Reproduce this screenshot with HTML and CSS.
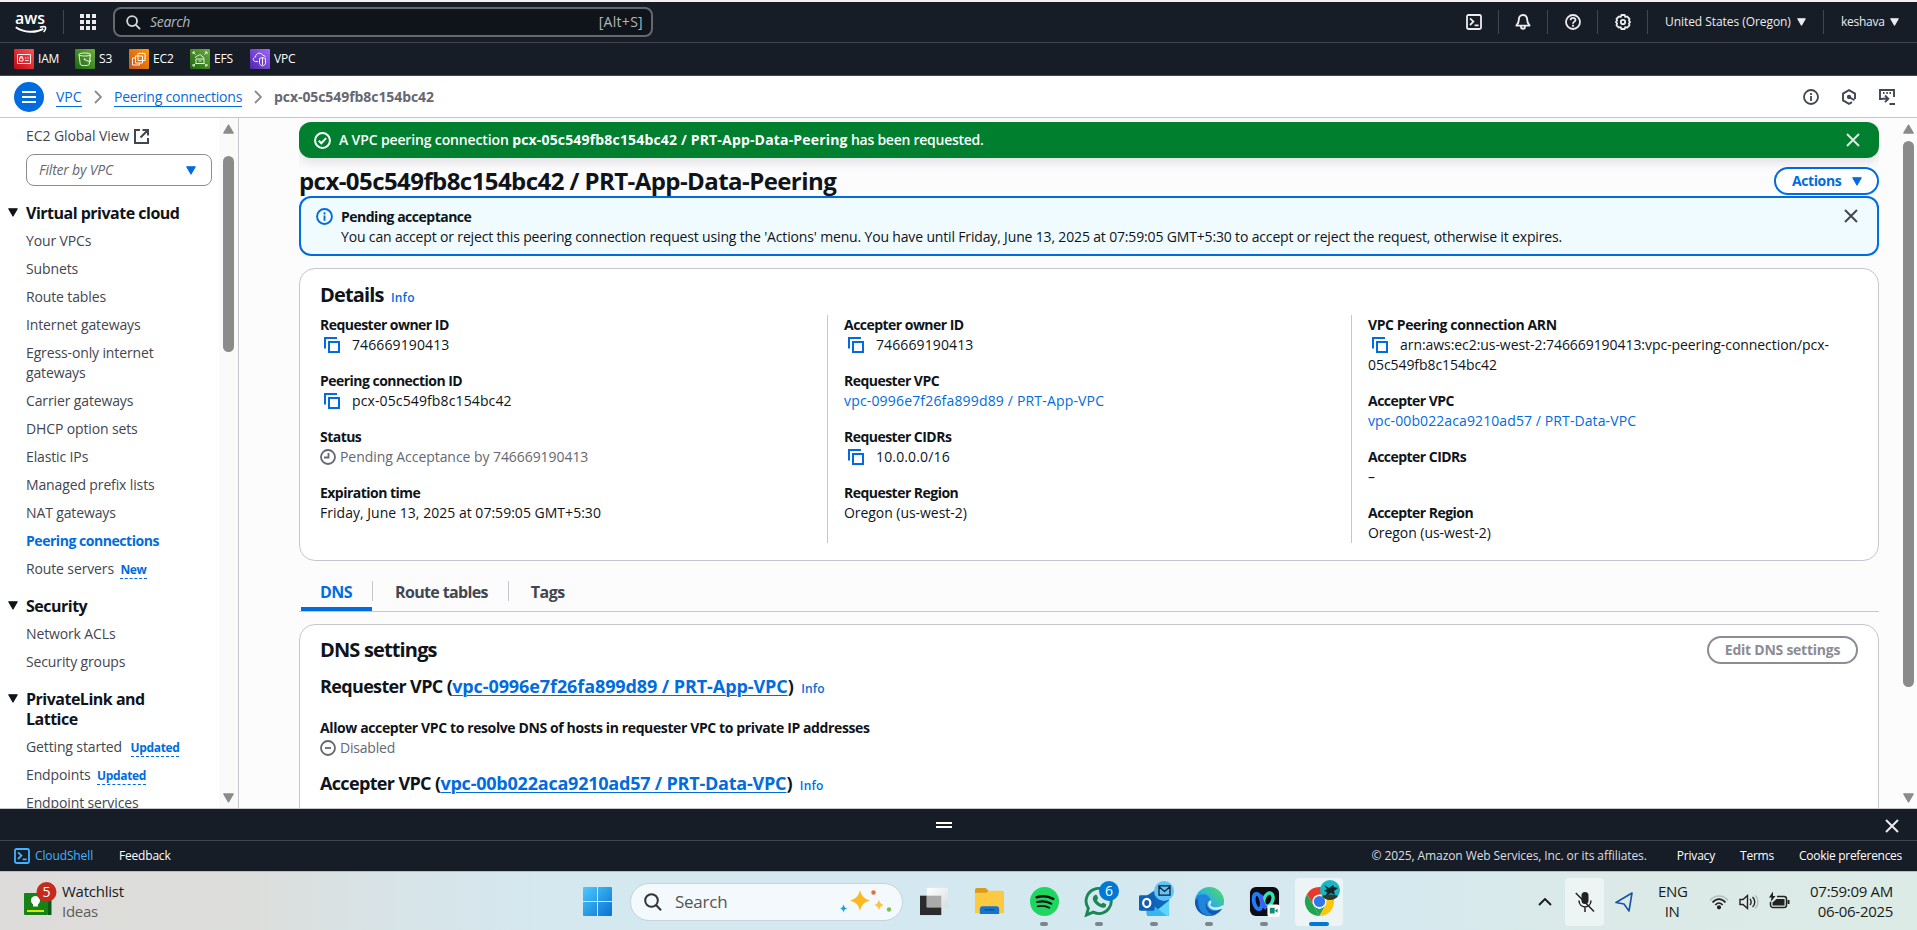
FILE: index.html
```html
<!DOCTYPE html>
<html lang="en">
<head>
<meta charset="utf-8">
<title>Peering connections | VPC Console</title>
<link rel="stylesheet" href="styles.css">
</head>
<body>
<svg class="defs" aria-hidden="true">
  <symbol id="i-copy" viewBox="0 0 16 16"><path d="M1 11.5V1h12M5 5h10v10H5z" fill="none" stroke="currentColor" stroke-width="2"/></symbol>
  <symbol id="i-close" viewBox="0 0 16 16"><path d="M2 2l12 12M14 2L2 14" fill="none" stroke="currentColor" stroke-width="2"/></symbol>
  <symbol id="i-tri" viewBox="0 0 10 9"><path d="M.8.8h8.4L5 8z" fill="currentColor" stroke="currentColor" stroke-width="1.2" stroke-linejoin="round"/></symbol>
  <symbol id="i-chev" viewBox="0 0 8 14"><path d="M1 1l6 6-6 6" fill="none" stroke="currentColor" stroke-width="1.9"/></symbol>
  <symbol id="i-info" viewBox="0 0 16 16"><g fill="none" stroke="currentColor" stroke-width="1.8"><circle cx="8" cy="8" r="7"/><path d="M8 7v5M8 4v2"/></g></symbol>
  <symbol id="i-shell" viewBox="0 0 16 16"><g fill="none" stroke="currentColor" stroke-width="1.8"><rect x="1" y="1" width="14" height="14" rx="1.5"/><path d="M4 4.4l3.4 3.2L4 11M8.6 11.4h4"/></g></symbol>
  <symbol id="i-search" viewBox="0 0 16 16"><g fill="none" stroke="currentColor" stroke-width="2"><circle cx="6.5" cy="6.5" r="5.3"/><path d="M10.3 10.3L15 15"/></g></symbol>
</svg>

<div class="strip"></div>
<header class="topbar">
  <svg class="aws" viewBox="0 0 32 24"><text x="0" y="14" font-size="17" textLength="30" lengthAdjust="spacingAndGlyphs" fill="#fff" class="awstext">aws</text><path d="M.8 17.200c8 5.700 20 5.900 27.500 1.600" fill="none" stroke="#fff" stroke-width="2"/><path d="M24.800 17.300c2.600-.8 5.400-.6 5.700-.1.300.7-.3 3-1.900 4.800" fill="none" stroke="#fff" stroke-width="1.500"/></svg>
  <i class="vbar v1"></i>
  <svg class="apps" viewBox="0 0 16 16" fill="#ebebf0"><path d="M0 0h4v4H0zM6 0h4v4H6zM12 0h4v4h-4zM0 6h4v4H0zM6 6h4v4H6zM12 6h4v4h-4zM0 12h4v4H0zM6 12h4v4H6zM12 12h4v4h-4z"/></svg>
  <div class="search"><svg width="15" height="15"><use href="#i-search"/></svg><em>Search</em><span>[Alt+S]</span></div>
  <div class="tools">
    <svg class="t16"><use href="#i-shell"/></svg><i class="vbar t1"></i>
    <svg class="t16" viewBox="0 0 16 16" fill="none" stroke="currentColor" stroke-width="1.900" stroke-linejoin="round"><path d="M8 1C5.200 1 3.900 3 3.900 5.200 3.900 8.300 3.200 9.600 1.400 11.600h13.200c-1.800-2-2.500-3.300-2.500-6.400C12.100 3 10.800 1 8 1zM6 12.500c0 3 4 3 4 0"/></svg><i class="vbar"></i>
    <svg class="t16" viewBox="0 0 16 16" fill="none" stroke="currentColor" stroke-width="1.800"><circle cx="8" cy="8" r="7"/><path d="M5.600 6.300c0-3.200 4.900-3 4.900-.3C10.500 7.700 8 7.600 8 9.800M8 10.800v1.900"/></svg><i class="vbar"></i>
    <svg class="t16" viewBox="0 0 16 16" fill="none" stroke="currentColor" stroke-width="1.800" stroke-linejoin="round"><path d="M6.300 1h3.400l.5 2 1.900-.5 2.400 2.400-.6 1.600 1.200 1.500-1.200 1.500.6 1.800-2.300 2.300-2-.5-.5 1.900H6.300l-.5-1.900-2 .5-2.300-2.300.6-1.800L.9 8l1.200-1.500-.6-1.600 2.400-2.400 1.900.5z"/><circle cx="8" cy="8" r="2.200"/></svg><i class="vbar"></i>
    <b class="region">United States (Oregon)</b><svg class="tri w"><use href="#i-tri"/></svg><i class="vbar t5"></i>
    <b class="user">keshava</b><svg class="tri w"><use href="#i-tri"/></svg>
  </div>
</header>

<nav class="favs">
  <a class="f1"><svg class="red" viewBox="0 0 20 20"><path d="M3.500 5.500h13v9h-13zM5.500 9h3.500v3h-3.500zM6.300 9V7.600h2V9M11 9h1.300M13.500 9h1.200M11 11.500h3.500"/></svg>IAM</a>
  <a class="f2"><svg class="green" viewBox="0 0 20 20"><path d="M4 5.500c0-2 11.500-2 11.500 0S4 7.500 4 5.500l1.300 10c.8 1.400 8 1.400 8.900 0l1.200-10M9.500 10.500l4 1.800c2 .8 3.200-.4 1.400-1.600"/><circle cx="9.500" cy="10.200" r=".5"/></svg>S3</a>
  <a class="f3"><svg class="orange" viewBox="0 0 20 20"><path d="M9 4.500h7v7h-7zM6.500 7h7v7h-7zM6 9H3.500v7h7v-2M11 3.500v1M13.500 3.500v1M16 7h1M16 9.500h1"/></svg>EC2</a>
  <a class="f4"><svg class="green" viewBox="0 0 20 20"><path d="M5.500 9c0-1.500 1.500-2.500 2.500-2 1-2 4-1.500 4 .8 1.500 0 2 .8 2 1.700M6 10h8M6 10v4.500h8V10M8.500 12h3M3 5V3h2M3 3l2.500 2.500M15 3h2v2M17 3l-2.500 2.500M3 15v2h2M3 17l2.500-2.500M15 17h2v-2M17 17l-2.500-2.500"/></svg>EFS</a>
  <a class="f5"><svg class="purple" viewBox="0 0 20 20"><path d="M8 12.500H5.500c-3-.3-3-4 0-4.500 0-4 6-5.500 7.500-1.500 1.500-.3 2 .5 2.300 1.500M9.500 9.500l3-1 3 1v5c-.5 1.500-2 2-3 2.500-1-.5-2.500-1-3-2.500zM12.500 9v7"/></svg>VPC</a>
</nav>

<div class="crumbs">
  <span class="burger"><svg viewBox="0 0 14 12"><path d="M0 1h14M0 6h14M0 11h14" stroke="#fff" stroke-width="2"/></svg></span>
  <a class="c1">VPC</a><svg class="chev"><use href="#i-chev"/></svg><a class="c2">Peering connections</a><svg class="chev ch2"><use href="#i-chev"/></svg><b>pcx-05c549fb8c154bc42</b>
  <div class="panelicons">
    <svg><use href="#i-info"/></svg>
    <svg viewBox="0 0 16 16" fill="none" stroke="currentColor" stroke-width="1.900"><path d="M14 10V4.600L8 1.200 2 4.600v6.800l6 3.400 3-1.700"/><circle cx="8" cy="8" r="1.200" fill="currentColor"/><path d="M8.500 8.300l5 2.900"/></svg>
    <svg viewBox="0 0 16 16" fill="none" stroke="currentColor" stroke-width="1.900"><path d="M3 10H1V1h14v7M4 4h1.500M7.300 4h1.500M10.500 4H12M3 9.800h5.500M6 6.500l3.300 3.300L6 13.200M10.500 15H16"/></svg>
  </div>
</div>

<div class="body">
  <aside class="side">
    <nav class="menu">
      <a class="ext">EC2 Global View<svg viewBox="0 0 15 15" fill="none" stroke="currentColor" stroke-width="2"><path d="M6 1H1v13h13V9M8.500 1H14v5.500M14 1L6.500 8.500"/></svg></a>
      <div class="filter"><em>Filter by VPC</em><svg class="tri"><use href="#i-tri"/></svg></div>
      <h3><svg class="tri"><use href="#i-tri"/></svg>Virtual private cloud</h3>
      <a>Your VPCs</a><a>Subnets</a><a>Route tables</a><a>Internet gateways</a><a>Egress-only internet<br>gateways</a><a>Carrier gateways</a><a>DHCP option sets</a><a>Elastic IPs</a><a>Managed prefix lists</a><a>NAT gateways</a><a class="on">Peering connections</a><a>Route servers <b>New</b></a>
      <h3><svg class="tri"><use href="#i-tri"/></svg>Security</h3>
      <a>Network ACLs</a><a>Security groups</a>
      <h3><svg class="tri"><use href="#i-tri"/></svg>PrivateLink and<br>Lattice</h3>
      <a class="gs">Getting started <b>Updated</b></a><a>Endpoints <b>Updated</b></a><a>Endpoint services</a>
    </nav>
    <div class="sbar"><svg class="up"><use href="#i-tri"/></svg><i></i><svg class="down"><use href="#i-tri"/></svg></div>
  </aside>

  <main>
    <div class="flash"><svg class="ic" viewBox="0 0 16 16" fill="none" stroke="currentColor" stroke-width="1.900"><circle cx="8" cy="8" r="7"/><path d="M4.500 8.200l2.400 2.400 4.500-4.800"/></svg><b>A VPC peering connection <strong>pcx-05c549fb8c154bc42 / PRT-App-Data-Peering</strong><span> has been requested.</span></b><svg class="x"><use href="#i-close"/></svg></div>
    <div class="titlebar"><h1>pcx-05c549fb8c154bc42 / PRT-App-Data-Peering</h1><button class="btn act">Actions<svg class="tri"><use href="#i-tri"/></svg></button></div>
    <div class="alert"><svg class="ic"><use href="#i-info"/></svg><div><b>Pending acceptance</b><p>You can accept or reject this peering connection request using the 'Actions' menu. You have until Friday, June 13, 2025 at 07:59:05 GMT+5:30 to accept or reject the request, otherwise it expires.</p></div><svg class="x"><use href="#i-close"/></svg></div>

    <section class="card details">
      <h2>Details <small>Info</small></h2>
      <div class="cols">
        <dl>
          <dt>Requester owner ID</dt><dd class="n"><svg><use href="#i-copy"/></svg>746669190413</dd>
          <dt>Peering connection ID</dt><dd class="n"><svg><use href="#i-copy"/></svg>pcx-05c549fb8c154bc42</dd>
          <dt>Status</dt><dd class="gray"><svg viewBox="0 0 16 16" fill="none" stroke="currentColor" stroke-width="1.800"><circle cx="8" cy="8" r="7"/><path d="M8.500 4v4.500H4"/></svg>Pending Acceptance by 746669190413</dd>
          <dt>Expiration time</dt><dd>Friday, June 13, 2025 at 07:59:05 GMT+5:30</dd>
        </dl>
        <dl>
          <dt>Accepter owner ID</dt><dd class="n"><svg><use href="#i-copy"/></svg>746669190413</dd>
          <dt>Requester VPC</dt><dd class="link">vpc-0996e7f26fa899d89 / PRT-App-VPC</dd>
          <dt>Requester CIDRs</dt><dd class="ip"><svg><use href="#i-copy"/></svg>10.0.0.0/16</dd>
          <dt>Requester Region</dt><dd class="w">Oregon (us-west-2)</dd>
        </dl>
        <dl>
          <dt class="long">VPC Peering connection ARN</dt><dd class="arn"><svg><use href="#i-copy"/></svg>arn:aws:ec2:us-west-2:746669190413:vpc-peering-connection/pcx-<br>05c549fb8c154bc42</dd>
          <dt>Accepter VPC</dt><dd class="link l2">vpc-00b022aca9210ad57 / PRT-Data-VPC</dd>
          <dt>Accepter CIDRs</dt><dd>–</dd>
          <dt>Accepter Region</dt><dd class="w">Oregon (us-west-2)</dd>
        </dl>
      </div>
    </section>

    <div class="tabs"><span class="tab sel">DNS</span><i></i><span class="tab">Route tables</span><i></i><span class="tab">Tags</span></div>

    <section class="card dns">
      <div class="dnshead"><h2>DNS settings</h2><button class="btn off">Edit DNS settings</button></div>
      <h4>Requester VPC (<a>vpc-0996e7f26fa899d89 / PRT-App-VPC</a>) <small>Info</small></h4>
      <p class="lab">Allow accepter VPC to resolve DNS of hosts in requester VPC to private IP addresses</p>
      <p class="dis"><svg viewBox="0 0 16 16" fill="none" stroke="currentColor" stroke-width="1.800"><circle cx="8" cy="8" r="7"/><path d="M5 8h6"/></svg>Disabled</p>
      <h4 class="h42">Accepter VPC (<a>vpc-00b022aca9210ad57 / PRT-Data-VPC</a>) <small>Info</small></h4>
    </section>
  </main>
  <div class="sbar mainbar"><svg class="up"><use href="#i-tri"/></svg><i></i><svg class="down"><use href="#i-tri"/></svg></div>
</div>

<div class="drawer"><svg class="grip" viewBox="0 0 16 6"><path d="M0 1h16M0 5h16" stroke="#fff" stroke-width="1.800"/></svg><svg class="x"><use href="#i-close"/></svg></div>
<footer class="foot"><svg class="t16"><use href="#i-shell"/></svg><span class="cs">CloudShell</span><b class="fb">Feedback</b><span class="copy">© 2025, Amazon Web Services, Inc. or its affiliates.</span><b class="p1">Privacy</b><b class="p2">Terms</b><b class="p3">Cookie preferences</b></footer>

<div class="taskbar">
  <div class="watch">
    <svg viewBox="0 0 34 38"><rect x="0" y="13" width="24" height="22" rx="1" fill="#178217"/><path d="M24 14h3.500v21H24z" fill="#0c5c14"/><circle cx="11.500" cy="20.500" r="4.500" fill="#fff"/><path d="M9 23h5v3.500H9z" fill="#fff"/><path d="M3 30h17v2H3z" fill="#d6ea00"/><circle cx="22.500" cy="12" r="10" fill="#c42b1c"/><text x="22.500" y="17" font-size="14" text-anchor="middle" fill="#fff">5</text></svg>
    <div class="wtext"><span>Watchlist</span><span class="sub">Ideas</span></div>
  </div>
  <svg class="win" viewBox="0 0 29 29"><defs><linearGradient id="gw" x1="0" y1="0" x2="1" y2="1"><stop offset="0" stop-color="#4ccbff"/><stop offset="1" stop-color="#0a6fd0"/></linearGradient></defs><path d="M1 0h13v14H0V1a1 1 0 011-1zM15 0h13a1 1 0 011 1v13H15zM0 15h14v14H1a1 1 0 01-1-1zM15 15h14v13a1 1 0 01-1 1H15z" fill="url(#gw)"/></svg>
  <div class="tsearch"><svg class="mag" viewBox="0 0 18 18" fill="none" stroke="#333" stroke-width="2"><circle cx="7.500" cy="7.500" r="6.300"/><path d="M12 12l5 5.200"/></svg><span>Search</span><svg class="spark" viewBox="0 0 52 24"><path d="M20 0c1.600 6.300 4 8.800 10 10.500-6 1.800-8.400 4-10 10.500-1.600-6.500-4-8.700-10-10.500C16 8.800 18.400 6.300 20 0z" fill="#f9b91f"/><path d="M39 9.500c.9 3.500 2 4.700 5 5.500-3 .9-4.100 2-5 5.500-.9-3.500-2-4.600-5-5.500 3-.8 4.100-2 5-5.500z" fill="#fcc53c"/><path d="M3.500 14.500c.7 2.600 1.500 3.300 3.800 4-2.300.6-3.100 1.400-3.800 4-.7-2.600-1.500-3.400-3.500-4 2-.7 2.800-1.400 3.500-4z" fill="#1ba1e6"/><circle cx="33.500" cy="2.500" r="2.200" fill="#ec6b38"/><circle cx="49" cy="19.500" r="2.200" fill="#7cc142"/></svg></div>
  <div class="apps2">
    <div><svg viewBox="0 0 32 32"><defs><linearGradient id="gt" x1="0" y1="0" x2="1" y2="1"><stop offset="0" stop-color="#fff"/><stop offset="1" stop-color="#d9dde0"/></linearGradient></defs><path d="M1 10h22v20H1z" fill="#2b2b2b"/><path d="M8 2h22v20H8z" fill="url(#gt)"/><path d="M8 10h15v12H8z" fill="#aaa"/></svg></div>
    <div><svg viewBox="0 0 32 32"><path d="M1 4a2 2 0 012-2h9l3 3v6H1z" fill="#d99a1e"/><path d="M1 7h12l2-2h14a2 2 0 012 2v21H1z" fill="#fcc941"/><path d="M6 29v-5a3 3 0 013-3h14a3 3 0 013 3v5z" fill="#1574cf"/><path d="M11 24.500h10" stroke="#0b4f9c" stroke-width="1.500"/></svg></div>
    <div class="run"><svg viewBox="0 0 32 32"><circle cx="16" cy="16" r="15" fill="#1ed760"/><g fill="none" stroke="#121212" stroke-linecap="round"><path d="M8 11.500c6-1.700 12-1 17 1.700" stroke-width="2.700"/><path d="M8.500 16.500c5-1.400 10-.7 14.500 1.700" stroke-width="2.300"/><path d="M9 21c4.500-1.100 8.500-.5 12 1.500" stroke-width="1.900"/></g></svg></div>
    <div class="run"><svg viewBox="0 0 32 32"><path d="M2.500 30l2-7A13 13 0 1116 28.500c-2.500 0-4.500-.6-6.500-1.500z" fill="none" stroke="#1b8755" stroke-width="3"/><path d="M11 9.500c1-.8 2-.6 2.500.4l1 2.400c.3.700-1 1.800-1.200 2.200.8 1.800 2.400 3.300 4.500 4.200.6-.4 1.400-1.700 2-1.500l2.800 1.400c.8.500.2 2.800-1 3.600-4 2-13-4.500-12.500-9.700.1-1 .9-2.300 1.900-3z" fill="#1b8755"/></svg><em>6</em></div>
    <div class="run"><svg viewBox="0 0 32 32"><path d="M8 10l10-7 13 9v17a2 2 0 01-2 2H10a2 2 0 01-2-2z" fill="#1266ba"/><path d="M8 16l12 8 11-9v14a2 2 0 01-2 2H10a2 2 0 01-2-2z" fill="#36b5f1"/><path d="M20 24l11-9v14a2 2 0 01-2 2z" fill="#5fd6ff"/><rect x="0" y="9.500" width="16" height="16" rx="1.500" fill="#0f5fb5"/><ellipse cx="8" cy="17.500" rx="3.700" ry="4.200" fill="none" stroke="#fff" stroke-width="2.300"/></svg><em class="mail"><svg viewBox="0 0 14 12" fill="none" stroke="#14202c" stroke-width="1.400"><path d="M1 1h12v10H1zM1 2l6 5 6-5"/></svg></em></div>
    <div class="run"><svg viewBox="0 0 32 32"><defs><linearGradient id="ge" x1="0" y1="1" x2="1" y2="0"><stop offset="0" stop-color="#1b6fd0"/><stop offset=".5" stop-color="#2bb3e0"/><stop offset="1" stop-color="#56e04a"/></linearGradient></defs><circle cx="16" cy="16" r="15" fill="url(#ge)"/><path d="M1 16c2-7 13-8 16-2-4 1-5 6-2 9 4 4 10 3 14 0-4 7-13 9.500-20 6.500C4 27 1 22 1 16z" fill="#1558b3"/><path d="M3 11c5-4 12-3 14 3-5 1-7 8-2 13 2 2 5 3.500 8 2.500C13 33 5 27 4.500 19 4.200 16 4 14 3 11z" fill="#1f84dc"/><path d="M17 15c2 1.500.2 3.300-.3 4.600 2 3.400 9 3 13.300-.1l1 2.500c-1 1-1.700 1.800-2.200 1.600-4.800 2-11 1.500-13.500-2.500-1.300-2.400-.6-5 1.700-6.100z" fill="#d7eaf0"/></svg></div>
    <div class="run"><svg viewBox="0 0 32 32"><rect x="1" y="1" width="30" height="30" rx="6" fill="#0c0c12"/><ellipse cx="9" cy="16" rx="4" ry="8" transform="rotate(-12 9 16)" fill="none" stroke="#1f7bff" stroke-width="4"/><ellipse cx="20" cy="14" rx="4.500" ry="7" transform="rotate(20 20 14)" fill="none" stroke="#2ee6b0" stroke-width="3.500"/><path d="M12 9c1 7 3 12 6 14" fill="none" stroke="#3f5ff5" stroke-width="4"/><rect x="19" y="19" width="13" height="13" rx="3" fill="#fff"/><path d="M21.500 22.500h5v6h-5zM26.500 25.500l3-2v4z" fill="#0d8f6f"/></svg></div>
    <div class="run cur"><svg viewBox="0 0 32 32"><path d="M3 8.500A15 15 0 0129 8.500L16 16z" fill="#e33b2e"/><path d="M3 8.500L10 20l6-4V8.500z" fill="#e33b2e"/><path d="M3 8.500l7 11.500 6 11A15 15 0 013 8.500z" fill="#22a352"/><path d="M10 20l6 4 6-4-6 11z" fill="#22a352"/><path d="M16 31A15 15 0 0029 8.500H16L22 20z" fill="#fdc60b"/><circle cx="16" cy="16" r="7.300" fill="#fff"/><circle cx="16" cy="16" r="5.800" fill="#2f77ee"/></svg><em class="pic"><svg viewBox="0 0 20 20"><circle cx="10" cy="10" r="10" fill="#19b6c4"/><path d="M2 16a10 10 0 0016 0c-4-2-12-2-16 0z" fill="#2b3a33"/><path d="M4 5l5 3 4-3 1 2 4 1-4 3 1 4-4-2-5 3 1-4-3-1 3-2z" fill="#10262c"/></svg></em></div>
  </div>
  <div class="tray">
    <svg class="up2" viewBox="0 0 14 8"><path d="M1 7l6-6 6 6" fill="none" stroke="#1b1b1b" stroke-width="1.900"/></svg>
    <div class="mic"><svg viewBox="0 0 20 22"><rect x="6.500" y="1" width="7" height="12" rx="3.500" fill="#222"/><path d="M4 9.500c0 8.500 12 8.500 12 0M10 16v5M.8 2L19 20.500" fill="none" stroke="#222" stroke-width="1.500"/></svg></div>
    <svg class="loc" viewBox="0 0 18 20" fill="none" stroke="#1352a8" stroke-width="1.600" stroke-linejoin="round"><path d="M17 1L1 10.500l8 1.500 5 7z"/></svg>
    <div class="lang"><span>ENG</span><span>IN</span></div>
    <svg class="wifi" viewBox="0 0 20 17" fill="none" stroke="#222" stroke-width="1.600"><path d="M1 7.500c5-6 13-6 18 0" stroke="#b3bfbf"/><path d="M3.500 9.500c4-4.500 9-4.500 13 0M6.300 12c2.300-2.600 5-2.600 7.400 0"/><circle cx="10" cy="14.300" r="1.300" fill="#222"/></svg>
    <svg class="vol" viewBox="0 0 20 16" fill="none" stroke="#222" stroke-width="1.400"><path d="M1 5.500h3L8.500 1.500v13L4 10.500H1z"/><path d="M11 5c1.500 1.500 1.500 4.500 0 6M13.500 3c3 2.500 3 7.500 0 10"/><path d="M16 1.500c3.800 3 3.800 10 0 13" stroke="#b3bfbf"/></svg>
    <svg class="bat" viewBox="0 0 21 17"><path d="M8 4.500h7a2.500 2.500 0 012.500 2.500v6a2.500 2.500 0 01-2.500 2.500H4A2.500 2.500 0 011.500 13v-3" fill="none" stroke="#222" stroke-width="1.500"/><path d="M7.500 7h8v6.500h-12V10.500zM18.500 8h2v4h-2zM4-.5L0 5.500h2.500L1.700 10 6.500 4H4z" fill="#222"/></svg>
    <div class="clock"><span>07:59:09 AM</span><span>06-06-2025</span></div>
  </div>
</div>
</body>
</html>
```

FILE: styles.css
```css
*{box-sizing:border-box}
html,body{margin:0;padding:0}
body{width:1917px;height:930px;overflow:hidden;display:flex;flex-direction:column;font:14px/20px "Open Sans","Noto Sans",sans-serif;color:#0f141a;letter-spacing:-.16px;background:#fff}
.defs{position:absolute;width:0;height:0}
svg{display:block;flex:none}
h1,h2,h3,h4,p,dl,dt,dd{margin:0;font-weight:700}
p,dd{font-weight:400}
i{display:block;flex:none}
.tri{width:10px;height:9px}
.t16{width:16px;height:16px}
.x{width:16px;height:16px}

.strip{height:2px;background:#f6eef0}
.topbar{height:41px;background:#161d26;border-bottom:1px solid #424650;display:flex;align-items:center;color:#ebebf0;padding-left:15px;flex:none}
.aws{width:32px;height:24px;overflow:visible}
.awstext{font-family:"Open Sans",sans-serif;font-weight:600;letter-spacing:0}
.vbar{width:1px;height:24px;background:#424650}
.v1{margin:0 16px}
.apps{width:16px;height:16px}
.search{margin-left:17px;width:540px;height:30px;border:2px solid #656871;border-radius:8px;background:#0f141a;display:flex;align-items:center;padding:0 8px 0 11px;color:#d5d5da}
.search em{margin-left:9px;color:#b4b4bb;letter-spacing:-.3px}
.search span{margin-left:auto;color:#b4b4bb;letter-spacing:.3px}
.tools{margin-left:auto;display:flex;align-items:center;padding-right:18px;font-size:12px;letter-spacing:-.06px}
.tools .vbar{margin:0 17px 0 16px}
.tools .t1{margin-right:16px}
.tools .t5{margin-left:17px}
.tools b,.foot b{font-weight:500}
.tools .region{width:126px;white-space:nowrap}
.tools .user{width:43px;letter-spacing:-.25px}
.tools .w{margin-left:6px;width:9px;height:8px}

.favs{height:33px;background:#161d26;border-bottom:1px solid #424650;display:flex;align-items:center;color:#fff;font-size:12px;font-weight:500;flex:none;padding:0 0 0 14px}
.favs a{display:flex;align-items:center;gap:4px}
.favs svg{width:20px;height:20px;border-radius:1px;fill:none;stroke:#fff;stroke-width:.9}
.f1{width:61px}.f2{width:54px}.f3{width:61px}.f4{width:60px}
.red{background:linear-gradient(45deg,#bd0816,#ff5252)}
.green{background:linear-gradient(45deg,#1b660f,#6cae3e)}
.orange{background:linear-gradient(45deg,#c8511b,#f90)}
.purple{background:linear-gradient(45deg,#4d27aa,#a166ff)}

.crumbs{height:42px;border-bottom:1px solid #c6c6cd;display:flex;align-items:center;padding:0 22px 0 14px;flex:none;color:#006ce0}
.burger{width:30px;height:30px;border-radius:50%;background:#006ce0;display:flex;align-items:center;justify-content:center;margin-right:12px}
.burger svg{width:14px;height:12px}
.crumbs a{border-bottom:1px solid #006ce0;line-height:19px;margin-top:1px}
.c1{width:26px;letter-spacing:0}
.c2{width:128px;letter-spacing:-.22px;white-space:nowrap}
.chev{width:8px;height:14px;margin:0 12px;color:#8c8c94}
.crumbs b{font-weight:700;color:#656871;letter-spacing:-.07px}
.panelicons{margin-left:auto;display:flex;gap:22px;color:#424650}
.panelicons svg{width:16px;height:16px}

.body{height:691px;flex:none;display:flex;border-bottom:1px solid #c6c6cd;background:#fcfcfd;overflow:hidden;min-height:0}
.side{width:239px;border-right:1px solid #c6c6cd;background:#fff;display:flex;height:100%;overflow:hidden;flex:none}
.menu{width:219px;padding:8px 0 0 26px;color:#424650}
.menu a{display:block;margin-bottom:8px;letter-spacing:-.13px}
.menu a.ext{display:flex;align-items:center;gap:5px;letter-spacing:-.08px;margin:0 0 8px}
.ext svg{width:15px;height:15px}
.filter{width:186px;height:32px;border:1px solid #8c8c94;border-radius:8px;display:flex;align-items:center;justify-content:space-between;padding:0 15px 0 12px;color:#656871;letter-spacing:-.2px}
.filter .tri{color:#006ce0}
.menu h3{font-size:16px;line-height:20px;color:#0f141a;letter-spacing:-.5px;position:relative;margin:17px 0 8px}
.menu h3 .tri{position:absolute;left:-18px;top:5px}
.menu .on{font-weight:700;color:#006ce0;letter-spacing:-.46px}
.menu b{display:inline-block;font-size:12px;line-height:15px;font-weight:700;color:#006ce0;border-bottom:1px dashed #006ce0;margin-left:3px;letter-spacing:-.35px;height:17px;vertical-align:top;margin-top:3px}
.menu .gs b{margin-left:5px}
.sbar{width:19px;background:#fafafa;display:flex;flex-direction:column;align-items:center;padding:6px 0 5px;color:#8b8b8b}
.sbar svg{width:13px;height:10px}
.up{transform:rotate(180deg)}
.sbar i{width:11px;height:196px;border-radius:6px;background:#8b8b8b;margin-top:22px}
.down{margin-top:auto}
.mainbar{width:16px;background:none;flex:none;margin-left:21px}
.mainbar i{margin-top:7px;height:546px}

main{width:1580px;margin-left:60px;flex:none;padding-top:4px;display:flex;flex-direction:column;height:690px;overflow:hidden;min-height:0}
.flash{height:36px;border-radius:12px;background:#00802f;color:#fff;display:flex;align-items:center;padding:0 18px 0 15px;flex:none;box-shadow:0 4px 12px rgba(0,7,22,.12);position:relative}
.flash b{font-weight:600;margin-left:8px;letter-spacing:-.14px;white-space:pre}
.flash strong{font-weight:700;letter-spacing:.17px}
.flash span{letter-spacing:-.26px}
.ic{width:17px;height:17px}
.flash .x{color:#dfe8e2;margin-left:auto}
.titlebar{height:38px;display:flex;align-items:center;justify-content:space-between;flex:none;padding-top:8px}
h1{font-size:24px;line-height:30px;letter-spacing:-.57px}
.btn{font:700 14px/16px "Open Sans",sans-serif;border:2px solid #006ce0;border-radius:20px;color:#006ce0;background:#fff;height:28px;display:flex;align-items:center;padding:0 16px}
.act{width:105px;justify-content:space-between;padding:0 15px 0 16px;letter-spacing:-.4px}
.alert{height:60px;border:2px solid #006ce0;border-radius:12px;background:#f0fbff;display:flex;padding:9px 18px 0 15px;flex:none}
.alert .ic{color:#006ce0;margin-top:1px}
.alert div{margin-left:8px;white-space:nowrap}
.alert b{font-weight:700;letter-spacing:-.5px;display:block}
.alert .x{margin-left:auto;margin-top:1px;color:#424650}
.card{border:1px solid #c6c6cd;border-radius:16px;background:#fff;flex:none}
h2{font-size:20px;line-height:24px;letter-spacing:-.85px}
small{font-size:12px;font-weight:600;color:#006ce0;letter-spacing:.2px;margin-left:3px}
.details{margin-top:12px;height:293px;padding:14px 0 0 20px}
.cols{display:flex;margin-top:5px;height:228px}
dl{width:524px;border-right:1px solid #c6c6cd}
dl:nth-child(1){width:508px}
dl:nth-child(2){padding-left:16px}
dl:nth-child(3){padding-left:16px;border:0}
dt{line-height:20px;letter-spacing:-.53px}
dt.long{letter-spacing:-.4px}
dd{line-height:20px;margin-bottom:16px;letter-spacing:.02px;white-space:nowrap}
dd svg{display:inline-block;width:16px;height:16px;color:#006ce0;margin:0 12px 0 4px;vertical-align:-3px}
.n{letter-spacing:.12px}
.ip{letter-spacing:.15px}
.gray{color:#656871;letter-spacing:-.06px}
.gray svg,.dis svg{color:#656871;margin:0 4px 0 0}
.link{color:#006ce0;letter-spacing:.17px}
.l2{letter-spacing:.1px}
.arn{letter-spacing:-.06px}
.w{letter-spacing:-.05px}
.tabs{height:42px;margin-top:9px;border-bottom:1px solid #c6c6cd;display:flex;align-items:center;font-size:16px;font-weight:700;color:#424650;flex:none;letter-spacing:-.65px;padding-left:2px}
.tab{padding:1px 20px 0 22px;height:41px;line-height:43px}
.tab.sel{width:71px;padding:1px 19px 0;color:#006ce0;border-bottom:4px solid #006ce0;letter-spacing:-.5px}
.tabs i{width:1px;height:20px;background:#c6c6cd}
.tab:last-child{letter-spacing:-.5px}
.dns{margin-top:12px;height:300px;padding:11px 20px 0}
.dnshead{display:flex;justify-content:space-between;align-items:center}
.off{border-color:#8c8c94;color:#8c8c94;width:151px;padding:0;justify-content:center;letter-spacing:-.25px}
h4{font-size:18px;line-height:22px;letter-spacing:-.65px;margin-top:11px}
h4 a{color:#006ce0;text-decoration:underline;text-underline-offset:2px;text-decoration-thickness:1px;letter-spacing:-.09px}
h4.h42 a{letter-spacing:-.22px}
h4 small{margin-left:4px}
.lab{font-weight:700;letter-spacing:-.385px;margin-top:18px}
.dis{color:#656871;display:flex;align-items:center;letter-spacing:-.2px}
.dis svg{width:16px;height:16px}
.h42{margin-top:14px}

.drawer{height:32px;background:#161d26;border-bottom:1px solid #424650;position:relative;display:flex;align-items:center;justify-content:center;color:#ebebf0;flex:none;padding:1px 29px 0 0}
.grip{width:16px;height:6px}
.drawer .x{position:absolute;right:17px;top:9px}
.foot{height:31px;background:#161d26;border-bottom:1px solid #b8bcc0;display:flex;align-items:center;padding:0 15px 0 14px;color:#fff;font-size:12px;letter-spacing:-.2px;flex:none}
.foot .t16,.cs{color:#42b4ff}
.cs{margin-left:5px;letter-spacing:-.12px}
.fb{margin-left:26px}
.copy{margin-left:auto;letter-spacing:-.09px;color:#dedee3}
.p1{margin-left:30px}.p2{margin-left:25px}.p3{margin-left:25px;letter-spacing:-.29px}

.taskbar{height:58px;padding-top:1px;display:flex;align-items:center;font-size:15px;line-height:20px;letter-spacing:-.25px;color:#1b1b1b;background:linear-gradient(90deg,#dedcda 0,#dcdedb 250px,#d7e4e8 400px,#d5e8f0 560px,#d3e8f0 900px,#d6e9ef 1400px,#dbeae8 1600px,#dcebe5 1917px)}
.watch{display:flex;align-items:center;margin-left:24px;width:559px;gap:4px}
.watch>svg{width:34px;height:38px;margin-top:-6px}
.watch span,.lang span,.clock span{display:block}
.wtext,.lang,.clock{padding-bottom:2px}
.watch .sub{color:#5c5c5c}
.win{width:29px;height:29px}
.tsearch{margin-left:18px;width:273px;height:38px;border-radius:20px;background:#f3f9fc;border:1px solid #c3d4dc;display:flex;align-items:center;padding:0 10px 0 13px;font-size:17px;color:#555}
.mag{width:18px;height:18px}
.tsearch span{margin-left:13px}
.spark{width:52px;height:24px;margin-left:auto}
.apps2{display:flex;margin-left:7px}
.apps2>div{width:48px;height:48px;margin-right:7px;display:flex;align-items:center;justify-content:center;position:relative;border-radius:4px}
.apps2>div>svg{width:31px;height:31px}
.run::after{content:"";position:absolute;left:20px;bottom:0;width:8px;height:4px;border-radius:2px;background:#7b868a}
.apps2 .cur{background:#edf4f6}
.apps2 .cur::after{left:14px;width:20px;background:#0078d4}
.apps2 em{position:absolute;right:4px;top:3px;width:20px;height:20px;border-radius:50%;background:#0078d4;color:#fff;font-style:normal;font-size:14px;text-align:center;letter-spacing:0}
.apps2 em.mail{background:#5ec4fb;display:flex;align-items:center;justify-content:center}
.mail svg{width:13px;height:11px}
.apps2 em.pic{right:3px;top:2px;background:none}
.tray{margin-left:auto;display:flex;align-items:center;padding-right:24px}
.up2{width:14px;height:8px}
.mic{margin-left:13px;width:39px;height:48px;border-radius:4px;background:#ecf4f4;display:flex;align-items:center;justify-content:center}
.mic svg{width:20px;height:22px}
.loc{width:18px;height:20px;margin-left:11px}
.lang{margin-left:25px;width:28px;text-align:center;letter-spacing:-.4px}
.wifi{width:20px;height:17px;margin-left:23px}
.vol{width:20px;height:16px;margin-left:10px}
.bat{width:21px;height:17px;margin-left:10px;margin-top:-2px}
.clock{text-align:right;margin-left:20px;letter-spacing:-.3px}
```
